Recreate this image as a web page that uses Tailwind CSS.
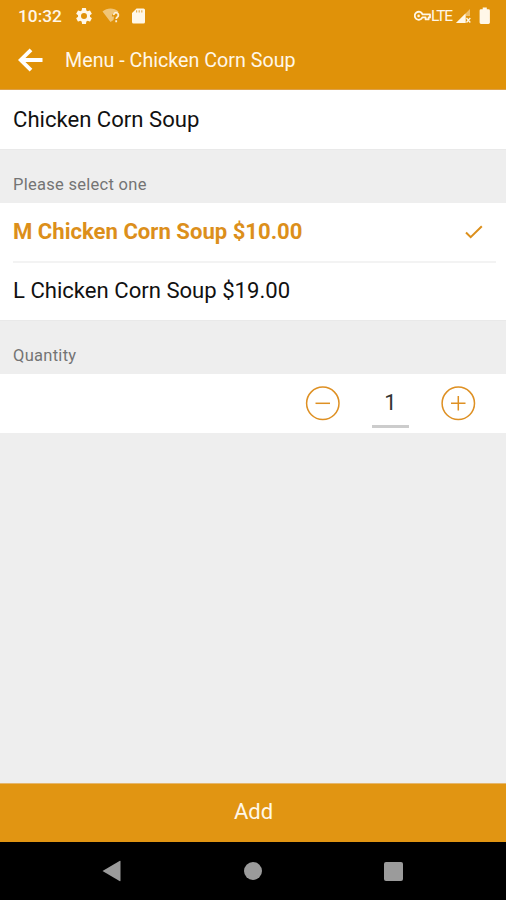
<!DOCTYPE html>
<html lang="en">
<head>
<meta charset="utf-8">
<title>Menu - Chicken Corn Soup</title>
<script src="https://cdn.jsdelivr.net/npm/@tailwindcss/browser@4"></script>
</head>
<body class="w-[506px] h-[900px] overflow-hidden bg-[#eeeeee] font-['Roboto',sans-serif] text-[#111111] flex flex-col">
<header class="h-[90px] shrink-0 bg-[#e09209] text-[#fff7e8] border-b border-[#dda048]">
  <div class="h-8 flex items-center pl-[18px] pr-[15px]">
    <span class="w-[56px] text-[17.3px] leading-8 font-medium whitespace-nowrap">10:32</span>
    <svg class="size-[20px]" viewBox="0 0 24 24" fill="currentColor"><path d="M19.14 12.94c.04-.3.06-.61.06-.94s-.02-.64-.07-.94l2.03-1.58a.49.49 0 0 0 .12-.61l-1.92-3.32a.49.49 0 0 0-.59-.22l-2.39.96a7 7 0 0 0-1.62-.94l-.36-2.54A.48.48 0 0 0 13.92 2.4h-3.84a.48.48 0 0 0-.47.41l-.36 2.54a7.3 7.3 0 0 0-1.62.94l-2.39-.96a.48.48 0 0 0-.59.22L2.74 8.87a.48.48 0 0 0 .12.61l2.03 1.58a6 6 0 0 0 0 1.88l-2.03 1.58a.49.49 0 0 0-.12.61l1.92 3.32c.12.22.37.29.59.22l2.39-.96c.5.38 1.03.7 1.62.94l.36 2.54c.05.24.24.41.48.41h3.84c.24 0 .44-.17.47-.41l.36-2.54a7 7 0 0 0 1.62-.94l2.39.96c.22.08.47 0 .59-.22l1.92-3.32a.48.48 0 0 0-.12-.61zM12 15.6a3.6 3.6 0 1 1 0-7.2 3.6 3.6 0 0 1 0 7.2z"/></svg>
    <svg class="ml-[8px] w-[18px] h-[16px]" viewBox="0 0 18 16"><path d="M0.5 3.5C5-0.5 12-0.5 16.500 3.500L15 5C11.500 4.500 9.500 6.500 10 8.500H12L11.500 12L8.500 14Z" fill="#fff7e8" fill-opacity=".5"/><path d="M11.800 7.200a2.300 2.300 0 1 1 3.800 1.500c-.9.700-1.400 1.200-1.400 2.300M14.200 12.300v2" fill="none" stroke="#fff7e8" stroke-width="1.800" stroke-opacity=".9"/></svg>
    <svg class="ml-[11px] w-[15px] h-[16px]" viewBox="0 0 15 16"><path d="M5.500.5H12.500a1.500 1.500 0 0 1 1.500 1.500V14a1.500 1.500 0 0 1-1.500 1.500H2.500A1.500 1.500 0 0 1 1 14V5Z" fill="currentColor"/><path d="M5.600 2.200v2.300M8.200 2.200v2.300M10.800 2.200v2.300" stroke="#e6b053" stroke-width="1.200"/></svg>
    <div class="ml-auto flex items-center">
      <svg class="w-[17px] h-[12px] -ml-px" viewBox="0 0 17 12" fill="none" stroke="currentColor"><path d="M8.500 4.400H16V7.400H14.600V9.400H11.600V7.400H8.400A4 4 0 1 1 8.500 4.400Z" stroke-width="1.800" stroke-linejoin="round"/><circle cx="4.600" cy="5.900" r="1.300" fill="currentColor" stroke="none"/></svg>
      <span class="w-[25px] text-[15.5px] leading-8 tracking-[-1.1px] whitespace-nowrap">LTE</span>
      <svg class="w-[16px] h-[16px]" viewBox="0 0 16 16"><path d="M0 15L14 1V8H10V15Z" fill="#fff7e8" fill-opacity=".45"/><path d="M0 15L9.500 5.500V15Z" fill="#fff7e8"/><path d="M10.500 10l3.800 4.500M14.300 10l-3.800 4.500" stroke="#fff7e8" stroke-width="1.300"/></svg>
      <svg class="ml-[7px] w-[12px] h-[18px]" viewBox="0 0 12 18" fill="currentColor"><path d="M3.700 .5h4.100v1.700h1.700q1.400 0 1.400 1.400v12q0 1.400-1.400 1.400H2q-1.400 0-1.400-1.400V3.600q0-1.400 1.400-1.400h1.700Z"/></svg>
    </div>
  </div>
  <div class="h-[57px] flex items-center pl-[18px]">
    <svg class="w-[26px] h-[24px] -mt-px" viewBox="0 0 26 24" fill="none" stroke="#ffffff" stroke-width="3.8"><path d="M2.500 12H24.500M13 1.800L2.700 12L13 22.200"/></svg>
    <h1 class="ml-[21px] mt-px text-[19.7px] leading-6 whitespace-nowrap">Menu - Chicken Corn Soup</h1>
  </div>
</header>
<main class="flex-1 flex flex-col">
  <section class="h-[60px] bg-white pl-[13px] pb-[2px] flex items-center border-b border-[#e9e9e9]"><h2 class="text-[22.1px] leading-7">Chicken Corn Soup</h2></section>
  <div class="h-[53px] pl-[13px] pt-[25px] text-[16.5px] tracking-[0.28px] leading-5 text-[#747474]">Please select one</div>
  <ul class="h-[118px] bg-white pl-[13px] pr-[10px] border-b border-[#e9e9e9]">
    <li class="h-[60px] pb-px flex items-center justify-between border-b-2 border-[#f3f3f3] text-[#dc8f1b]">
      <span class="pb-[2px] text-[22.1px] leading-7 font-bold">M Chicken Corn Soup $10.00</span>
      <svg class="mr-[13px] w-[18px] h-[14px]" viewBox="0 0 18 14" fill="none" stroke="currentColor" stroke-width="2"><path d="M1 7.500L5.700 12.200L16.800 1.300"/></svg>
    </li>
    <li class="h-[56px] pb-[2px] flex items-center"><span class="text-[22.1px] leading-7">L Chicken Corn Soup $19.00</span></li>
  </ul>
  <div class="h-[53px] pl-[13px] pt-[25px] text-[16.5px] tracking-[0.28px] leading-5 text-[#747474]">Quantity</div>
  <section class="h-[59px] bg-white pl-[305px] flex items-center text-[#de9023]">
    <svg class="size-[35px]" viewBox="0 0 35 35" fill="none" stroke="currentColor" stroke-width="1.5"><circle cx="17.800" cy="17.300" r="16.200"/><path d="M10.500 17.300H25"/></svg>
    <div class="ml-[32px] mt-px w-[37px] h-[48px] border-b-[3px] border-[#cccccc] text-[#333333] text-[22px] leading-[45px] text-center">1</div>
    <svg class="ml-[32px] size-[35px]" viewBox="0 0 35 35" fill="none" stroke="currentColor" stroke-width="1.5"><circle cx="17.300" cy="17.300" r="16.200"/><path d="M10 17.300H24.500M17.300 10V24.600"/></svg>
  </section>
</main>
<button class="h-[59px] shrink-0 bg-[#e19512] border-t border-[#e5b66c] text-[#fff7e8] text-[22px] pb-[3px] pl-px">Add</button>
<nav class="h-[58px] shrink-0 bg-black flex items-center justify-between pl-[103px] pr-[103px] text-[#9b9b9b]">
  <svg class="w-[19px] h-[22px] -ml-px mr-px" viewBox="0 0 19 22" fill="currentColor"><path d="M0.500 11L17.500 1Q18.500.5 18.500 1.500V20.500Q18.500 21.500 17.500 21Z"/></svg>
  <div class="size-[18px] rounded-full bg-[#9b9b9b]"></div>
  <div class="size-[19px] rounded-[2px] bg-[#9b9b9b]"></div>
</nav>
</body>
</html>
